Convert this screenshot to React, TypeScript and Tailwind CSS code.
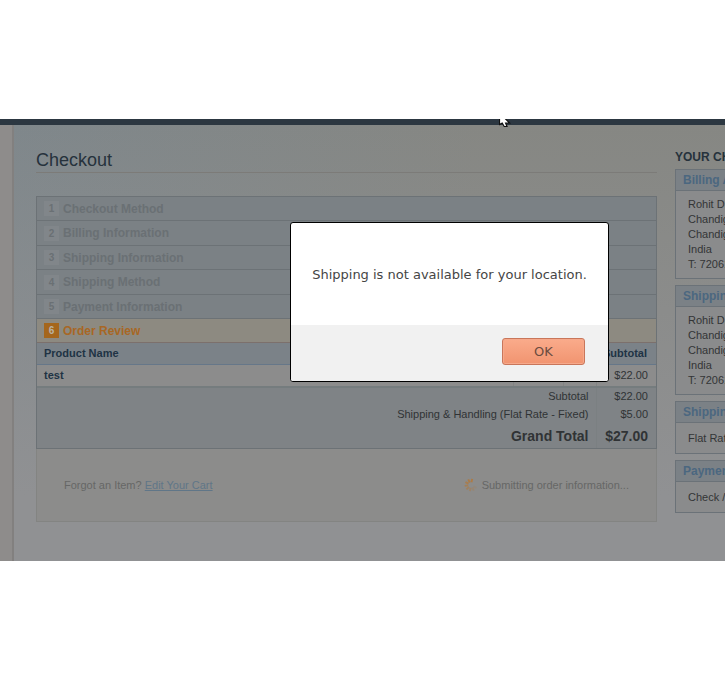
import type { ReactNode } from "react";

const steps = [
  "Checkout Method",
  "Billing Information",
  "Shipping Information",
  "Shipping Method",
  "Payment Information",
];

const address = ["Rohit Dhiman", "Chandigarh", "Chandigarh, 160022", "India", "T: 7206123456"];

const spokes = [
  { angle: 10, opacity: 1 },
  { angle: -26, opacity: 0.95 },
  { angle: -62, opacity: 0.85 },
  { angle: -98, opacity: 0.75 },
  { angle: -134, opacity: 0.6 },
  { angle: -170, opacity: 0.5 },
  { angle: -206, opacity: 0.35 },
  { angle: -242, opacity: 0.2 },
];

function Spinner() {
  return (
    <svg viewBox="0 0 16 16" className="h-3.5 w-3.5" aria-hidden="true">
      {spokes.map(({ angle, opacity }) => (
        <path
          key={angle}
          d="M8 0.8V4.8"
          stroke="#ad7b45"
          strokeWidth="2.2"
          opacity={opacity}
          transform={`rotate(${angle} 8 8)`}
        />
      ))}
    </svg>
  );
}

function Pointer() {
  return (
    <svg viewBox="0 0 12 9" className="absolute left-[499px] top-0 h-[9px] w-3" aria-hidden="true">
      <path
        d="M0.5 -2V5.5L3.2 4L5.2 7.5H8L6.6 4H10.6L4.6 -2Z"
        fill="#fff"
        stroke="#111"
        strokeWidth="1.2"
      />
    </svg>
  );
}

type ProgressBlockProps = {
  title: string;
  children: ReactNode;
};

function ProgressBlock({ title, children }: ProgressBlockProps) {
  return (
    <section className="mb-1.5 w-48 border border-[#6b7278] bg-[#8a8b8c]">
      <h3 className="h-[21px] border-b border-[#6b7278] bg-[#7b8186] pl-[7px] text-[12px] font-bold leading-5 text-[#4b6780]">
        {title}
      </h3>
      <div className="py-1.5 pl-3 text-[11px] leading-[15px] text-[#333536]">{children}</div>
    </section>
  );
}

function ReviewTable() {
  return (
    <table className="w-full border-collapse text-[11px] text-[#303335]">
      <thead>
        <tr className="h-[21px] border-b border-[#667789] bg-[#7b8288] text-[#203344]">
          <th scope="col" className="pl-[7px] text-left font-bold">
            Product Name
          </th>
          <th scope="col" className="w-[84px]" />
          <th scope="col" className="w-[50px]" />
          <th scope="col" className="w-[33px]" />
          <th scope="col" className="w-[60px] pr-[9px] text-right font-bold">
            Subtotal
          </th>
        </tr>
      </thead>
      <tbody>
        <tr className="h-[23px] border-b-2 border-[#757c7e] bg-[#8c8c8c]">
          <td className="pl-[7px] font-bold text-[#203344]">test</td>
          <td className="border-r border-[#828484]" />
          <td className="border-r border-[#828484]" />
          <td className="border-r border-[#828484]" />
          <td className="pr-2 text-right">$22.00</td>
        </tr>
      </tbody>
      <tfoot className="bg-[#7f8386] text-right">
        <tr className="h-[18px]">
          <td colSpan={4} className="border-r border-[#7b8082] pr-[7px]">
            Subtotal
          </td>
          <td className="pr-2">$22.00</td>
        </tr>
        <tr className="h-[18px]">
          <td colSpan={4} className="border-r border-[#7b8082] pr-[7px]">
            Shipping &amp; Handling (Flat Rate - Fixed)
          </td>
          <td className="pr-2">$5.00</td>
        </tr>
        <tr className="h-[25px] text-[14px] font-bold leading-5">
          <td colSpan={4} className="border-r border-[#7b8082] pr-[7px]">
            Grand Total
          </td>
          <td className="pr-2">$27.00</td>
        </tr>
      </tfoot>
    </table>
  );
}

function Alert() {
  return (
    <div
      role="alertdialog"
      aria-labelledby="alert-message"
      className="absolute left-[290px] top-[103px] w-[319px] overflow-hidden rounded-[3px] border border-black bg-white font-['DejaVu_Sans',sans-serif] text-[13px]"
    >
      <p
        id="alert-message"
        className="flex h-[102px] items-center justify-center whitespace-nowrap pt-0.5 text-[#454545]"
      >
        Shipping is not available for your location.
      </p>
      <div className="flex h-14 items-start justify-end bg-[#f1f1f1] pr-[23px] pt-[13px]">
        <button
          type="button"
          className="h-[27px] w-[83px] rounded-[3px] border border-[#c9765a] bg-linear-to-b from-[#faab8b] to-[#f19470] text-[#6b4c40] shadow-[inset_0_0_0_1px_#f6a98b]"
        >
          OK
        </button>
      </div>
    </div>
  );
}

export default function App() {
  return (
    <div className="min-h-screen bg-white py-[119px] font-['Liberation_Sans',Arial,sans-serif]">
      <div className="relative overflow-hidden">
        <header className="h-1.5 bg-[#2c3741]" />
        <div className="flex bg-[#8e8c8b]">
          <div className="w-3.5 shrink-0 border-r-2 border-[#82807f]" />
          <div className="flex min-w-0 flex-1 bg-[linear-gradient(to_bottom,transparent,#909193_85%),linear-gradient(to_right,#7f878b,#868783_65%)]">
            <main className="min-w-0 flex-1 pb-[39px] pl-[22px] pt-[23px]">
              <h1 className="border-b border-[#7c7b78] text-[18px] leading-[24px] text-[#26323c]">
                Checkout
              </h1>
              <div className="mt-[23px] border border-[#6c7276]">
                <ol className="text-[12px] font-bold">
                  {steps.map((step, index) => (
                    <li
                      key={step}
                      className="flex h-6 items-center gap-1 border-b border-[#6c7276] bg-[#7b8185] pl-[7px] text-[#6a7074] even:h-[25px]"
                    >
                      <span className="flex h-[15px] w-[15px] items-center justify-center bg-[#81868a] text-[10px]">
                        {index + 1}
                      </span>
                      {step}
                    </li>
                  ))}
                  <li className="flex h-6 items-center gap-1 border-b border-[#7c706c] bg-[#8d8a81] pl-[7px] text-[#a86724]">
                    <span className="flex h-[15px] w-[15px] items-center justify-center bg-[#a5661c] text-[10px] text-[#b9b2a5]">
                      6
                    </span>
                    Order Review
                  </li>
                </ol>
                <ReviewTable />
              </div>
              <div className="flex h-[73px] items-center justify-between border border-t-0 border-[#838482] bg-[#8c8c8b] px-[27px] text-[11px] text-[#666766]">
                <p>
                  Forgot an Item?{" "}
                  <a href="#cart" className="text-[#607688] underline">
                    Edit Your Cart
                  </a>
                </p>
                <p className="flex items-center gap-1">
                  <Spinner />
                  Submitting order information...
                </p>
              </div>
            </main>
            <aside className="ml-[18px] w-[50px] shrink-0 overflow-hidden whitespace-nowrap pt-6">
              <h2 className="mb-1 text-[12px] font-bold leading-4 text-[#26323c]">
                YOUR CHECKOUT PROGRESS
              </h2>
              <ProgressBlock title="Billing Address">
                {address.map((line) => (
                  <p key={line}>{line}</p>
                ))}
              </ProgressBlock>
              <ProgressBlock title="Shipping Address">
                {address.map((line) => (
                  <p key={line}>{line}</p>
                ))}
              </ProgressBlock>
              <ProgressBlock title="Shipping Method">
                <p className="leading-[18px]">Flat Rate - Fixed</p>
              </ProgressBlock>
              <ProgressBlock title="Payment Method">
                <p className="leading-[18px]">Check / Money order</p>
              </ProgressBlock>
            </aside>
          </div>
        </div>
        <Pointer />
        <Alert />
      </div>
    </div>
  );
}
